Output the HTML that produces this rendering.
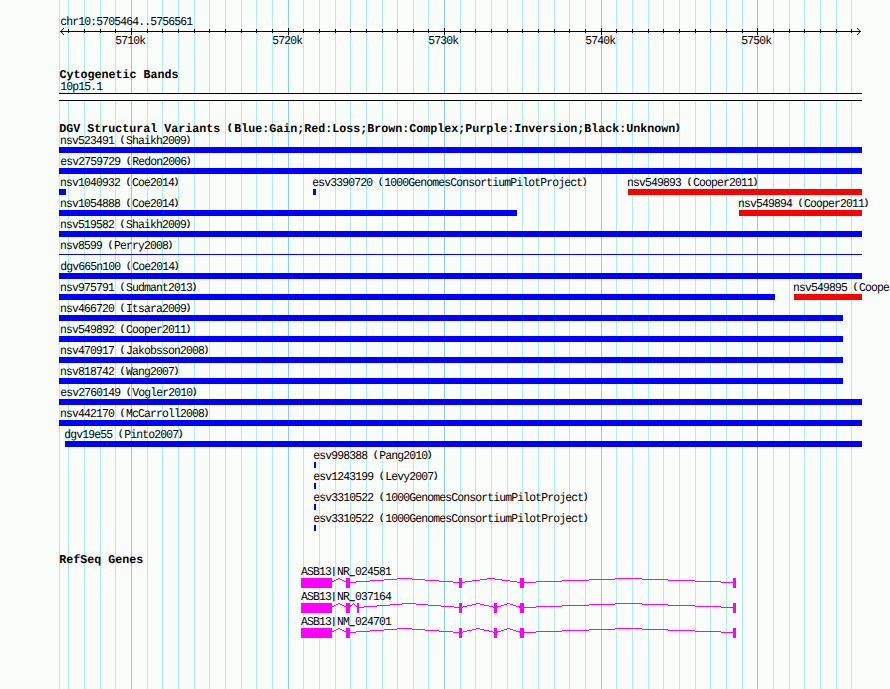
<!DOCTYPE html>
<html><head><meta charset="utf-8"><style>
html,body{margin:0;padding:0;background:#fbfdfb;}
svg{display:block;}
text{font-family:"Liberation Mono",monospace;font-size:12px;fill:#000;text-rendering:geometricPrecision;}
text.b{font-weight:bold;}
</style></head><body>
<svg width="890" height="689" viewBox="0 0 890 689">
<rect x="0" y="0" width="890" height="689" fill="#fbfdfb"/>
<rect x="59" y="0" width="1" height="689" fill="#afeeee"/>
<rect x="68" y="0" width="1" height="689" fill="#afeeee"/>
<rect x="84" y="0" width="1" height="689" fill="#afeeee"/>
<rect x="100" y="0" width="1" height="689" fill="#afeeee"/>
<rect x="115" y="0" width="1" height="689" fill="#afeeee"/>
<rect x="131" y="0" width="1" height="689" fill="#87ceeb"/>
<rect x="147" y="0" width="1" height="689" fill="#afeeee"/>
<rect x="162" y="0" width="1" height="689" fill="#afeeee"/>
<rect x="178" y="0" width="1" height="689" fill="#afeeee"/>
<rect x="194" y="0" width="1" height="689" fill="#afeeee"/>
<rect x="209" y="0" width="1" height="689" fill="#afeeee"/>
<rect x="225" y="0" width="1" height="689" fill="#afeeee"/>
<rect x="241" y="0" width="1" height="689" fill="#afeeee"/>
<rect x="256" y="0" width="1" height="689" fill="#afeeee"/>
<rect x="272" y="0" width="1" height="689" fill="#afeeee"/>
<rect x="288" y="0" width="1" height="689" fill="#87ceeb"/>
<rect x="303" y="0" width="1" height="689" fill="#afeeee"/>
<rect x="319" y="0" width="1" height="689" fill="#afeeee"/>
<rect x="335" y="0" width="1" height="689" fill="#afeeee"/>
<rect x="350" y="0" width="1" height="689" fill="#afeeee"/>
<rect x="366" y="0" width="1" height="689" fill="#afeeee"/>
<rect x="382" y="0" width="1" height="689" fill="#afeeee"/>
<rect x="397" y="0" width="1" height="689" fill="#afeeee"/>
<rect x="413" y="0" width="1" height="689" fill="#afeeee"/>
<rect x="428" y="0" width="1" height="689" fill="#afeeee"/>
<rect x="444" y="0" width="1" height="689" fill="#87ceeb"/>
<rect x="460" y="0" width="1" height="689" fill="#afeeee"/>
<rect x="475" y="0" width="1" height="689" fill="#afeeee"/>
<rect x="491" y="0" width="1" height="689" fill="#afeeee"/>
<rect x="507" y="0" width="1" height="689" fill="#afeeee"/>
<rect x="522" y="0" width="1" height="689" fill="#afeeee"/>
<rect x="538" y="0" width="1" height="689" fill="#afeeee"/>
<rect x="554" y="0" width="1" height="689" fill="#afeeee"/>
<rect x="569" y="0" width="1" height="689" fill="#afeeee"/>
<rect x="585" y="0" width="1" height="689" fill="#afeeee"/>
<rect x="601" y="0" width="1" height="689" fill="#87ceeb"/>
<rect x="616" y="0" width="1" height="689" fill="#afeeee"/>
<rect x="632" y="0" width="1" height="689" fill="#afeeee"/>
<rect x="648" y="0" width="1" height="689" fill="#afeeee"/>
<rect x="663" y="0" width="1" height="689" fill="#afeeee"/>
<rect x="679" y="0" width="1" height="689" fill="#afeeee"/>
<rect x="695" y="0" width="1" height="689" fill="#afeeee"/>
<rect x="710" y="0" width="1" height="689" fill="#afeeee"/>
<rect x="726" y="0" width="1" height="689" fill="#afeeee"/>
<rect x="742" y="0" width="1" height="689" fill="#afeeee"/>
<rect x="757" y="0" width="1" height="689" fill="#87ceeb"/>
<rect x="773" y="0" width="1" height="689" fill="#afeeee"/>
<rect x="789" y="0" width="1" height="689" fill="#afeeee"/>
<rect x="804" y="0" width="1" height="689" fill="#afeeee"/>
<rect x="820" y="0" width="1" height="689" fill="#afeeee"/>
<rect x="836" y="0" width="1" height="689" fill="#afeeee"/>
<rect x="851" y="0" width="1" height="689" fill="#afeeee"/>
<text class="r" transform="translate(60.276,25) scale(0.9500,1)"><tspan y="0" font-size="12" letter-spacing="-0.8842">chr10:5705464..5756561</tspan></text>
<rect x="60" y="31" width="801" height="1" fill="#000"/>
<path d="M64,28 L60.7,31.5 L64,35" fill="none" stroke="#000" stroke-width="1"/>
<path d="M857,28 L860.3,31.5 L857,35" fill="none" stroke="#000" stroke-width="1"/>
<rect x="68" y="29" width="1" height="4" fill="#000"/>
<rect x="84" y="29" width="1" height="4" fill="#000"/>
<rect x="100" y="29" width="1" height="4" fill="#000"/>
<rect x="115" y="29" width="1" height="4" fill="#000"/>
<rect x="131" y="28" width="1" height="7" fill="#000"/>
<text class="r" transform="translate(115.287,44) scale(0.9500,1)"><tspan y="0" font-size="12" letter-spacing="-0.8842">5710k</tspan></text>
<rect x="147" y="29" width="1" height="4" fill="#000"/>
<rect x="162" y="29" width="1" height="4" fill="#000"/>
<rect x="178" y="29" width="1" height="4" fill="#000"/>
<rect x="194" y="29" width="1" height="4" fill="#000"/>
<rect x="209" y="29" width="1" height="4" fill="#000"/>
<rect x="225" y="29" width="1" height="4" fill="#000"/>
<rect x="241" y="29" width="1" height="4" fill="#000"/>
<rect x="256" y="29" width="1" height="4" fill="#000"/>
<rect x="272" y="29" width="1" height="4" fill="#000"/>
<rect x="288" y="28" width="1" height="7" fill="#000"/>
<text class="r" transform="translate(272.288,44) scale(0.9500,1)"><tspan y="0" font-size="12" letter-spacing="-0.8842">5720k</tspan></text>
<rect x="303" y="29" width="1" height="4" fill="#000"/>
<rect x="319" y="29" width="1" height="4" fill="#000"/>
<rect x="335" y="29" width="1" height="4" fill="#000"/>
<rect x="350" y="29" width="1" height="4" fill="#000"/>
<rect x="366" y="29" width="1" height="4" fill="#000"/>
<rect x="382" y="29" width="1" height="4" fill="#000"/>
<rect x="397" y="29" width="1" height="4" fill="#000"/>
<rect x="413" y="29" width="1" height="4" fill="#000"/>
<rect x="428" y="29" width="1" height="4" fill="#000"/>
<rect x="444" y="28" width="1" height="7" fill="#000"/>
<text class="r" transform="translate(428.288,44) scale(0.9500,1)"><tspan y="0" font-size="12" letter-spacing="-0.8842">5730k</tspan></text>
<rect x="460" y="29" width="1" height="4" fill="#000"/>
<rect x="475" y="29" width="1" height="4" fill="#000"/>
<rect x="491" y="29" width="1" height="4" fill="#000"/>
<rect x="507" y="29" width="1" height="4" fill="#000"/>
<rect x="522" y="29" width="1" height="4" fill="#000"/>
<rect x="538" y="29" width="1" height="4" fill="#000"/>
<rect x="554" y="29" width="1" height="4" fill="#000"/>
<rect x="569" y="29" width="1" height="4" fill="#000"/>
<rect x="585" y="29" width="1" height="4" fill="#000"/>
<rect x="601" y="28" width="1" height="7" fill="#000"/>
<text class="r" transform="translate(585.288,44) scale(0.9500,1)"><tspan y="0" font-size="12" letter-spacing="-0.8842">5740k</tspan></text>
<rect x="616" y="29" width="1" height="4" fill="#000"/>
<rect x="632" y="29" width="1" height="4" fill="#000"/>
<rect x="648" y="29" width="1" height="4" fill="#000"/>
<rect x="663" y="29" width="1" height="4" fill="#000"/>
<rect x="679" y="29" width="1" height="4" fill="#000"/>
<rect x="695" y="29" width="1" height="4" fill="#000"/>
<rect x="710" y="29" width="1" height="4" fill="#000"/>
<rect x="726" y="29" width="1" height="4" fill="#000"/>
<rect x="742" y="29" width="1" height="4" fill="#000"/>
<rect x="757" y="28" width="1" height="7" fill="#000"/>
<text class="r" transform="translate(741.288,44) scale(0.9500,1)"><tspan y="0" font-size="12" letter-spacing="-0.8842">5750k</tspan></text>
<rect x="773" y="29" width="1" height="4" fill="#000"/>
<rect x="789" y="29" width="1" height="4" fill="#000"/>
<rect x="804" y="29" width="1" height="4" fill="#000"/>
<rect x="820" y="29" width="1" height="4" fill="#000"/>
<rect x="836" y="29" width="1" height="4" fill="#000"/>
<rect x="851" y="29" width="1" height="4" fill="#000"/>
<text class="b" transform="translate(59.544,78) scale(0.9722,1)"><tspan y="0" font-size="12" letter-spacing="0.0000">Cytogenetic Bands</tspan></text>
<text class="r" transform="translate(60.176,90) scale(0.9500,1)"><tspan y="0" font-size="12" letter-spacing="-0.8842">10p15.1</tspan></text>
<rect x="59" y="93" width="803" height="8" fill="#ffffff"/>
<rect x="59" y="93" width="803" height="1" fill="#000"/>
<rect x="59" y="100" width="803" height="1" fill="#000"/>
<text class="b" transform="translate(59.231,132) scale(0.9722,1)"><tspan y="0" font-size="12" letter-spacing="0.0000">DGV Structural Variants </tspan><tspan y="-1.8" font-size="8.6" letter-spacing="2.0400" stroke="#000" stroke-width="0.5">(</tspan><tspan y="0" font-size="12" letter-spacing="0.0000">Blue:Gain;Red:Loss;Brown:Complex;Purple:Inversion;Black:Unknown</tspan><tspan y="-1.8" font-size="8.6" letter-spacing="2.0400" stroke="#000" stroke-width="0.5">)</tspan></text>
<text class="r" transform="translate(60.004,144) scale(0.9500,1)"><tspan y="0" font-size="12" letter-spacing="-0.8842">nsv523491 </tspan><tspan y="-1.8" font-size="8.6" letter-spacing="1.1558" stroke="#000" stroke-width="0.35">(</tspan><tspan y="0" font-size="12" letter-spacing="-0.8842">Shaikh2009</tspan><tspan y="-1.8" font-size="8.6" letter-spacing="1.1558" stroke="#000" stroke-width="0.35">)</tspan></text>
<rect x="59" y="147" width="803" height="6" fill="#0000ff"/>
<text class="r" transform="translate(60.260,165) scale(0.9500,1)"><tspan y="0" font-size="12" letter-spacing="-0.8842">esv2759729 </tspan><tspan y="-1.8" font-size="8.6" letter-spacing="1.1558" stroke="#000" stroke-width="0.35">(</tspan><tspan y="0" font-size="12" letter-spacing="-0.8842">Redon2006</tspan><tspan y="-1.8" font-size="8.6" letter-spacing="1.1558" stroke="#000" stroke-width="0.35">)</tspan></text>
<rect x="59" y="168" width="803" height="6" fill="#0000ff"/>
<text class="r" transform="translate(60.004,186) scale(0.9500,1)"><tspan y="0" font-size="12" letter-spacing="-0.8842">nsv1040932 </tspan><tspan y="-1.8" font-size="8.6" letter-spacing="1.1558" stroke="#000" stroke-width="0.35">(</tspan><tspan y="0" font-size="12" letter-spacing="-0.8842">Coe2014</tspan><tspan y="-1.8" font-size="8.6" letter-spacing="1.1558" stroke="#000" stroke-width="0.35">)</tspan></text>
<rect x="59" y="189" width="7" height="6" fill="#0000ff"/>
<text class="r" transform="translate(312.260,186) scale(0.9500,1)"><tspan y="0" font-size="12" letter-spacing="-0.8842">esv3390720 </tspan><tspan y="-1.8" font-size="8.6" letter-spacing="1.1558" stroke="#000" stroke-width="0.35">(</tspan><tspan y="0" font-size="12" letter-spacing="-0.8842">1000GenomesConsortiumPilotProject</tspan><tspan y="-1.8" font-size="8.6" letter-spacing="1.1558" stroke="#000" stroke-width="0.35">)</tspan></text>
<rect x="313" y="189" width="3" height="6" fill="#0000ff"/>
<text class="r" transform="translate(627.004,186) scale(0.9500,1)"><tspan y="0" font-size="12" letter-spacing="-0.8842">nsv549893 </tspan><tspan y="-1.8" font-size="8.6" letter-spacing="1.1558" stroke="#000" stroke-width="0.35">(</tspan><tspan y="0" font-size="12" letter-spacing="-0.8842">Cooper2011</tspan><tspan y="-1.8" font-size="8.6" letter-spacing="1.1558" stroke="#000" stroke-width="0.35">)</tspan></text>
<rect x="628" y="189" width="234" height="6" fill="#ff0000"/>
<text class="r" transform="translate(60.004,207) scale(0.9500,1)"><tspan y="0" font-size="12" letter-spacing="-0.8842">nsv1054888 </tspan><tspan y="-1.8" font-size="8.6" letter-spacing="1.1558" stroke="#000" stroke-width="0.35">(</tspan><tspan y="0" font-size="12" letter-spacing="-0.8842">Coe2014</tspan><tspan y="-1.8" font-size="8.6" letter-spacing="1.1558" stroke="#000" stroke-width="0.35">)</tspan></text>
<rect x="59" y="210" width="458" height="6" fill="#0000ff"/>
<text class="r" transform="translate(738.004,207) scale(0.9500,1)"><tspan y="0" font-size="12" letter-spacing="-0.8842">nsv549894 </tspan><tspan y="-1.8" font-size="8.6" letter-spacing="1.1558" stroke="#000" stroke-width="0.35">(</tspan><tspan y="0" font-size="12" letter-spacing="-0.8842">Cooper2011</tspan><tspan y="-1.8" font-size="8.6" letter-spacing="1.1558" stroke="#000" stroke-width="0.35">)</tspan></text>
<rect x="739" y="210" width="123" height="6" fill="#ff0000"/>
<text class="r" transform="translate(60.004,228) scale(0.9500,1)"><tspan y="0" font-size="12" letter-spacing="-0.8842">nsv519582 </tspan><tspan y="-1.8" font-size="8.6" letter-spacing="1.1558" stroke="#000" stroke-width="0.35">(</tspan><tspan y="0" font-size="12" letter-spacing="-0.8842">Shaikh2009</tspan><tspan y="-1.8" font-size="8.6" letter-spacing="1.1558" stroke="#000" stroke-width="0.35">)</tspan></text>
<rect x="59" y="231" width="803" height="6" fill="#0000ff"/>
<text class="r" transform="translate(60.004,249) scale(0.9500,1)"><tspan y="0" font-size="12" letter-spacing="-0.8842">nsv8599 </tspan><tspan y="-1.8" font-size="8.6" letter-spacing="1.1558" stroke="#000" stroke-width="0.35">(</tspan><tspan y="0" font-size="12" letter-spacing="-0.8842">Perry2008</tspan><tspan y="-1.8" font-size="8.6" letter-spacing="1.1558" stroke="#000" stroke-width="0.35">)</tspan></text>
<rect x="59" y="254" width="803" height="1" fill="#0000ff"/>
<text class="r" transform="translate(60.232,270) scale(0.9500,1)"><tspan y="0" font-size="12" letter-spacing="-0.8842">dgv665n100 </tspan><tspan y="-1.8" font-size="8.6" letter-spacing="1.1558" stroke="#000" stroke-width="0.35">(</tspan><tspan y="0" font-size="12" letter-spacing="-0.8842">Coe2014</tspan><tspan y="-1.8" font-size="8.6" letter-spacing="1.1558" stroke="#000" stroke-width="0.35">)</tspan></text>
<rect x="59" y="273" width="803" height="6" fill="#0000ff"/>
<text class="r" transform="translate(60.004,291) scale(0.9500,1)"><tspan y="0" font-size="12" letter-spacing="-0.8842">nsv975791 </tspan><tspan y="-1.8" font-size="8.6" letter-spacing="1.1558" stroke="#000" stroke-width="0.35">(</tspan><tspan y="0" font-size="12" letter-spacing="-0.8842">Sudmant2013</tspan><tspan y="-1.8" font-size="8.6" letter-spacing="1.1558" stroke="#000" stroke-width="0.35">)</tspan></text>
<rect x="59" y="294" width="716" height="6" fill="#0000ff"/>
<text class="r" transform="translate(793.004,291) scale(0.9500,1)"><tspan y="0" font-size="12" letter-spacing="-0.8842">nsv549895 </tspan><tspan y="-1.8" font-size="8.6" letter-spacing="1.1558" stroke="#000" stroke-width="0.35">(</tspan><tspan y="0" font-size="12" letter-spacing="-0.8842">Cooper2011</tspan><tspan y="-1.8" font-size="8.6" letter-spacing="1.1558" stroke="#000" stroke-width="0.35">)</tspan></text>
<rect x="794" y="294" width="68" height="6" fill="#ff0000"/>
<text class="r" transform="translate(60.004,312) scale(0.9500,1)"><tspan y="0" font-size="12" letter-spacing="-0.8842">nsv466720 </tspan><tspan y="-1.8" font-size="8.6" letter-spacing="1.1558" stroke="#000" stroke-width="0.35">(</tspan><tspan y="0" font-size="12" letter-spacing="-0.8842">Itsara2009</tspan><tspan y="-1.8" font-size="8.6" letter-spacing="1.1558" stroke="#000" stroke-width="0.35">)</tspan></text>
<rect x="59" y="315" width="784" height="6" fill="#0000ff"/>
<text class="r" transform="translate(60.004,333) scale(0.9500,1)"><tspan y="0" font-size="12" letter-spacing="-0.8842">nsv549892 </tspan><tspan y="-1.8" font-size="8.6" letter-spacing="1.1558" stroke="#000" stroke-width="0.35">(</tspan><tspan y="0" font-size="12" letter-spacing="-0.8842">Cooper2011</tspan><tspan y="-1.8" font-size="8.6" letter-spacing="1.1558" stroke="#000" stroke-width="0.35">)</tspan></text>
<rect x="59" y="336" width="784" height="6" fill="#0000ff"/>
<text class="r" transform="translate(60.004,354) scale(0.9500,1)"><tspan y="0" font-size="12" letter-spacing="-0.8842">nsv470917 </tspan><tspan y="-1.8" font-size="8.6" letter-spacing="1.1558" stroke="#000" stroke-width="0.35">(</tspan><tspan y="0" font-size="12" letter-spacing="-0.8842">Jakobsson2008</tspan><tspan y="-1.8" font-size="8.6" letter-spacing="1.1558" stroke="#000" stroke-width="0.35">)</tspan></text>
<rect x="59" y="357" width="784" height="6" fill="#0000ff"/>
<text class="r" transform="translate(60.004,375) scale(0.9500,1)"><tspan y="0" font-size="12" letter-spacing="-0.8842">nsv818742 </tspan><tspan y="-1.8" font-size="8.6" letter-spacing="1.1558" stroke="#000" stroke-width="0.35">(</tspan><tspan y="0" font-size="12" letter-spacing="-0.8842">Wang2007</tspan><tspan y="-1.8" font-size="8.6" letter-spacing="1.1558" stroke="#000" stroke-width="0.35">)</tspan></text>
<rect x="59" y="378" width="784" height="6" fill="#0000ff"/>
<text class="r" transform="translate(60.260,396) scale(0.9500,1)"><tspan y="0" font-size="12" letter-spacing="-0.8842">esv2760149 </tspan><tspan y="-1.8" font-size="8.6" letter-spacing="1.1558" stroke="#000" stroke-width="0.35">(</tspan><tspan y="0" font-size="12" letter-spacing="-0.8842">Vogler2010</tspan><tspan y="-1.8" font-size="8.6" letter-spacing="1.1558" stroke="#000" stroke-width="0.35">)</tspan></text>
<rect x="59" y="399" width="803" height="6" fill="#0000ff"/>
<text class="r" transform="translate(60.004,417) scale(0.9500,1)"><tspan y="0" font-size="12" letter-spacing="-0.8842">nsv442170 </tspan><tspan y="-1.8" font-size="8.6" letter-spacing="1.1558" stroke="#000" stroke-width="0.35">(</tspan><tspan y="0" font-size="12" letter-spacing="-0.8842">McCarroll2008</tspan><tspan y="-1.8" font-size="8.6" letter-spacing="1.1558" stroke="#000" stroke-width="0.35">)</tspan></text>
<rect x="59" y="420" width="803" height="6" fill="#0000ff"/>
<text class="r" transform="translate(64.232,438) scale(0.9500,1)"><tspan y="0" font-size="12" letter-spacing="-0.8842">dgv19e55 </tspan><tspan y="-1.8" font-size="8.6" letter-spacing="1.1558" stroke="#000" stroke-width="0.35">(</tspan><tspan y="0" font-size="12" letter-spacing="-0.8842">Pinto2007</tspan><tspan y="-1.8" font-size="8.6" letter-spacing="1.1558" stroke="#000" stroke-width="0.35">)</tspan></text>
<rect x="65" y="441" width="797" height="6" fill="#0000ff"/>
<text class="r" transform="translate(313.260,459) scale(0.9500,1)"><tspan y="0" font-size="12" letter-spacing="-0.8842">esv998388 </tspan><tspan y="-1.8" font-size="8.6" letter-spacing="1.1558" stroke="#000" stroke-width="0.35">(</tspan><tspan y="0" font-size="12" letter-spacing="-0.8842">Pang2010</tspan><tspan y="-1.8" font-size="8.6" letter-spacing="1.1558" stroke="#000" stroke-width="0.35">)</tspan></text>
<rect x="314" y="462" width="2" height="6" fill="#0000ff"/>
<text class="r" transform="translate(313.260,480) scale(0.9500,1)"><tspan y="0" font-size="12" letter-spacing="-0.8842">esv1243199 </tspan><tspan y="-1.8" font-size="8.6" letter-spacing="1.1558" stroke="#000" stroke-width="0.35">(</tspan><tspan y="0" font-size="12" letter-spacing="-0.8842">Levy2007</tspan><tspan y="-1.8" font-size="8.6" letter-spacing="1.1558" stroke="#000" stroke-width="0.35">)</tspan></text>
<rect x="314" y="483" width="2" height="6" fill="#0000ff"/>
<text class="r" transform="translate(313.260,501) scale(0.9500,1)"><tspan y="0" font-size="12" letter-spacing="-0.8842">esv3310522 </tspan><tspan y="-1.8" font-size="8.6" letter-spacing="1.1558" stroke="#000" stroke-width="0.35">(</tspan><tspan y="0" font-size="12" letter-spacing="-0.8842">1000GenomesConsortiumPilotProject</tspan><tspan y="-1.8" font-size="8.6" letter-spacing="1.1558" stroke="#000" stroke-width="0.35">)</tspan></text>
<rect x="314" y="504" width="2" height="6" fill="#0000ff"/>
<text class="r" transform="translate(313.260,522) scale(0.9500,1)"><tspan y="0" font-size="12" letter-spacing="-0.8842">esv3310522 </tspan><tspan y="-1.8" font-size="8.6" letter-spacing="1.1558" stroke="#000" stroke-width="0.35">(</tspan><tspan y="0" font-size="12" letter-spacing="-0.8842">1000GenomesConsortiumPilotProject</tspan><tspan y="-1.8" font-size="8.6" letter-spacing="1.1558" stroke="#000" stroke-width="0.35">)</tspan></text>
<rect x="314" y="525" width="2" height="6" fill="#0000ff"/>
<text class="b" transform="translate(59.220,563) scale(0.9722,1)"><tspan y="0" font-size="12" letter-spacing="0.0000">RefSeq Genes</tspan></text>
<text class="r" transform="translate(301.000,575) scale(0.9500,1)"><tspan y="0" font-size="12" letter-spacing="-0.8842">ASB13</tspan><tspan y="-1.0" font-size="9.65" letter-spacing="0.5258" stroke="#000" stroke-width="0.3">|</tspan><tspan y="0" font-size="12" letter-spacing="-0.8842">NR</tspan><tspan y="0.4" dx="0.5" font-size="9.0" letter-spacing="0.4158" stroke="#000" stroke-width="0.55">_</tspan><tspan y="0" font-size="12" letter-spacing="-0.8842">024581</tspan></text>
<polyline points="331,582.5 339.0,578.5 347,582.5" fill="none" stroke="#ff00ff" stroke-width="1" shape-rendering="crispEdges"/>
<polyline points="349,582.5 404.5,578.5 460,582.5" fill="none" stroke="#ff00ff" stroke-width="1" shape-rendering="crispEdges"/>
<polyline points="461,582.5 491.0,578.5 521,582.5" fill="none" stroke="#ff00ff" stroke-width="1" shape-rendering="crispEdges"/>
<polyline points="523,582.5 628.5,578.5 734,582.5" fill="none" stroke="#ff00ff" stroke-width="1" shape-rendering="crispEdges"/>
<rect x="301" y="578" width="31" height="10" fill="#ff00ff"/>
<rect x="346" y="578" width="4" height="10" fill="#ff00ff"/>
<rect x="459" y="578" width="3" height="10" fill="#ff00ff"/>
<rect x="520" y="578" width="4" height="10" fill="#ff00ff"/>
<rect x="733" y="578" width="3" height="10" fill="#ff00ff"/>
<text class="r" transform="translate(301.000,600) scale(0.9500,1)"><tspan y="0" font-size="12" letter-spacing="-0.8842">ASB13</tspan><tspan y="-1.0" font-size="9.65" letter-spacing="0.5258" stroke="#000" stroke-width="0.3">|</tspan><tspan y="0" font-size="12" letter-spacing="-0.8842">NR</tspan><tspan y="0.4" dx="0.5" font-size="9.0" letter-spacing="0.4158" stroke="#000" stroke-width="0.55">_</tspan><tspan y="0" font-size="12" letter-spacing="-0.8842">037164</tspan></text>
<polyline points="331,607.5 339.0,603.5 347,607.5" fill="none" stroke="#ff00ff" stroke-width="1" shape-rendering="crispEdges"/>
<polyline points="349,607.5 353.5,603.5 358,607.5" fill="none" stroke="#ff00ff" stroke-width="1" shape-rendering="crispEdges"/>
<polyline points="358,607.5 409.0,603.5 460,607.5" fill="none" stroke="#ff00ff" stroke-width="1" shape-rendering="crispEdges"/>
<polyline points="461,607.5 478.0,603.5 495,607.5" fill="none" stroke="#ff00ff" stroke-width="1" shape-rendering="crispEdges"/>
<polyline points="496,607.5 508.5,603.5 521,607.5" fill="none" stroke="#ff00ff" stroke-width="1" shape-rendering="crispEdges"/>
<polyline points="523,607.5 628.5,603.5 734,607.5" fill="none" stroke="#ff00ff" stroke-width="1" shape-rendering="crispEdges"/>
<rect x="301" y="603" width="31" height="10" fill="#ff00ff"/>
<rect x="346" y="603" width="4" height="10" fill="#ff00ff"/>
<rect x="357" y="603" width="2" height="10" fill="#ff00ff"/>
<rect x="459" y="603" width="3" height="10" fill="#ff00ff"/>
<rect x="494" y="603" width="3" height="10" fill="#ff00ff"/>
<rect x="520" y="603" width="4" height="10" fill="#ff00ff"/>
<rect x="733" y="603" width="3" height="10" fill="#ff00ff"/>
<text class="r" transform="translate(301.000,625) scale(0.9500,1)"><tspan y="0" font-size="12" letter-spacing="-0.8842">ASB13</tspan><tspan y="-1.0" font-size="9.65" letter-spacing="0.5258" stroke="#000" stroke-width="0.3">|</tspan><tspan y="0" font-size="12" letter-spacing="-0.8842">NM</tspan><tspan y="0.4" dx="0.5" font-size="9.0" letter-spacing="0.4158" stroke="#000" stroke-width="0.55">_</tspan><tspan y="0" font-size="12" letter-spacing="-0.8842">024701</tspan></text>
<polyline points="331,632.5 339.0,628.5 347,632.5" fill="none" stroke="#ff00ff" stroke-width="1" shape-rendering="crispEdges"/>
<polyline points="349,632.5 404.5,628.5 460,632.5" fill="none" stroke="#ff00ff" stroke-width="1" shape-rendering="crispEdges"/>
<polyline points="461,632.5 478.0,628.5 495,632.5" fill="none" stroke="#ff00ff" stroke-width="1" shape-rendering="crispEdges"/>
<polyline points="496,632.5 508.5,628.5 521,632.5" fill="none" stroke="#ff00ff" stroke-width="1" shape-rendering="crispEdges"/>
<polyline points="523,632.5 628.5,628.5 734,632.5" fill="none" stroke="#ff00ff" stroke-width="1" shape-rendering="crispEdges"/>
<rect x="301" y="628" width="31" height="10" fill="#ff00ff"/>
<rect x="346" y="628" width="4" height="10" fill="#ff00ff"/>
<rect x="459" y="628" width="3" height="10" fill="#ff00ff"/>
<rect x="494" y="628" width="3" height="10" fill="#ff00ff"/>
<rect x="520" y="628" width="4" height="10" fill="#ff00ff"/>
<rect x="733" y="628" width="3" height="10" fill="#ff00ff"/>
</svg>
</body></html>
